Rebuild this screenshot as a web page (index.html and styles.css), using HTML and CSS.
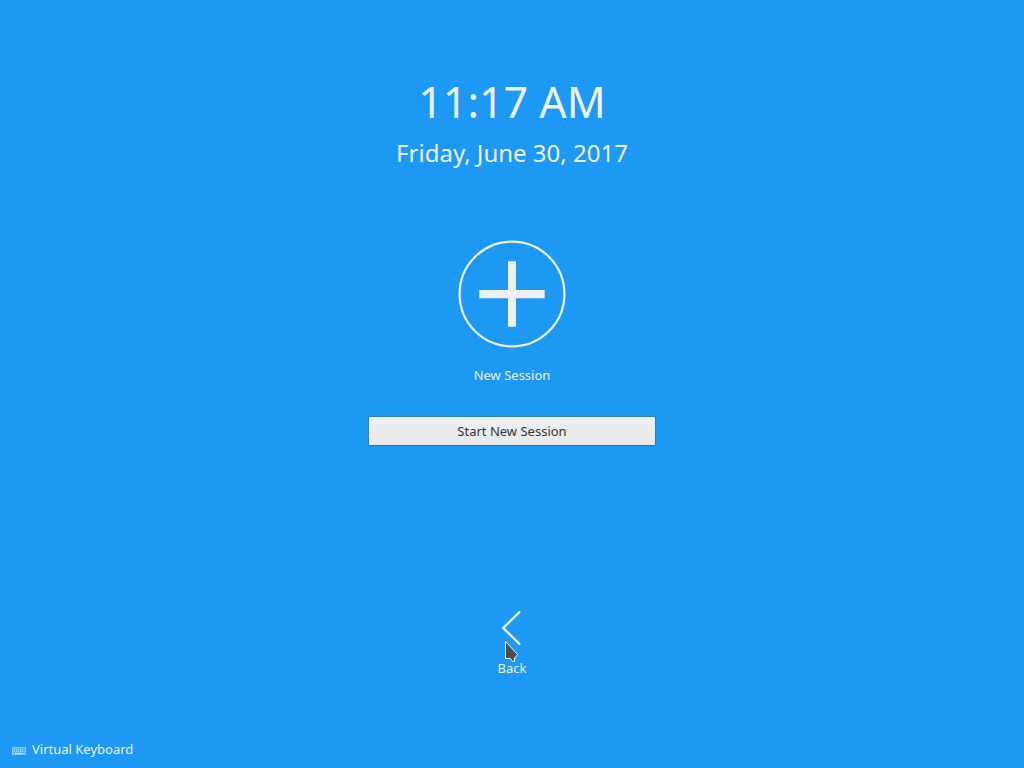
FILE: index.html
```html
<!DOCTYPE html>
<html lang="en">
<head>
<meta charset="utf-8">
<meta name="viewport" content="width=device-width, initial-scale=1">
<title>New Session</title>
<link rel="stylesheet" href="styles.css">
</head>
<body>
<div class="screen">
  <header class="clock">
    <time class="clock-time" datetime="11:17">11:17 AM</time>
    <time class="clock-date" datetime="2017-06-30">Friday, June 30, 2017</time>
  </header>
  <main class="session">
    <svg class="session-icon" viewBox="0 0 108 108" aria-hidden="true">
      <circle cx="54" cy="54" r="52.4" fill="none" stroke="#eff0f1" stroke-width="2.2"/>
      <path d="M50 21.300h8v28.700h28.700v8.300H58v28.500h-8V58.300H21.300V50H50z" fill="#eff0f1"/>
    </svg>
    <h1 class="session-name">New Session</h1>
    <button class="start" type="button">Start New Session</button>
  </main>
  <nav class="actions">
    <button class="back" type="button">
      <svg class="back-icon" viewBox="0 0 48 48" aria-hidden="true">
        <path d="M32 7.500 15.200 24 32 40.500" fill="none" stroke="#eff0f1" stroke-width="2.300"/>
      </svg>
      <span>Back</span>
      <svg class="pointer" viewBox="0 0 16 24" aria-hidden="true">
        <path d="M1.500 1.500v17h5l2 3h2v-4h1l2-3z" fill="#4a4e52" stroke="#eff0f1" stroke-width="1"/>
      </svg>
    </button>
  </nav>
  <footer class="footer">
    <button class="keyboard" type="button">
      <svg class="keyboard-icon" viewBox="0 0 16 16" aria-hidden="true">
        <path d="M0 6h14v8H0z" fill="#eff0f1" fill-opacity=".3"/>
        <path d="M.5 6.500h13v7H.5z" fill="none" stroke="#eff0f1" stroke-opacity=".35"/>
        <path d="M2 8.500h10M2 10.500h10" stroke="#eff0f1" stroke-dasharray="1 1" stroke-opacity=".6"/>
        <path d="M3 12.500h8" stroke="#eff0f1" stroke-opacity=".65"/>
      </svg>
      <span>Virtual Keyboard</span>
    </button>
  </footer>
</div>
</body>
</html>
```
FILE: styles.css
```css
* {
  box-sizing: border-box;
}

body {
  margin: 0;
  background: #1d99f3;
  color: #eff0f1;
  font: 13px/18px "Noto Sans", "Open Sans", sans-serif;
}

button {
  border: 0;
  padding: 0;
  background: none;
  color: inherit;
  font: inherit;
}

.screen {
  display: flex;
  flex-direction: column;
  min-height: 100vh;
}

.clock {
  display: flex;
  flex-direction: column;
  align-items: center;
  padding-top: 72px;
}

.clock-time {
  font-size: 43px;
  line-height: 60px;
}

.clock-date {
  margin-top: 4px;
  font-size: 24px;
  line-height: 34px;
}

.session {
  display: flex;
  flex-direction: column;
  align-items: center;
  padding: 70px 16px 0;
}

.session-icon {
  width: 108px;
  height: 108px;
}

.session-name {
  margin: 18px 0 32px;
  font-size: 13px;
  font-weight: 400;
}

.start {
  width: 288px;
  max-width: 100%;
  height: 30px;
  border: 1px solid #2c80bd;
  border-bottom-color: #3675a2;
  border-radius: 2px;
  background: linear-gradient(#f0f1f2, #e7e8e9) padding-box;
  color: #31363b;
}

.actions {
  display: flex;
  justify-content: center;
  margin-top: auto;
  padding-bottom: 63px;
}

.back {
  position: relative;
  display: flex;
  flex-direction: column;
  align-items: center;
  gap: 7px;
  min-width: 48px;
}

.back-icon {
  width: 48px;
  height: 48px;
}

.pointer {
  position: absolute;
  left: 16px;
  top: 36px;
  width: 16px;
  height: 24px;
}

.footer {
  padding: 0 12px 10px;
}

.keyboard {
  display: flex;
  align-items: center;
  gap: 4px;
}

.keyboard-icon {
  width: 16px;
  height: 16px;
}
```
